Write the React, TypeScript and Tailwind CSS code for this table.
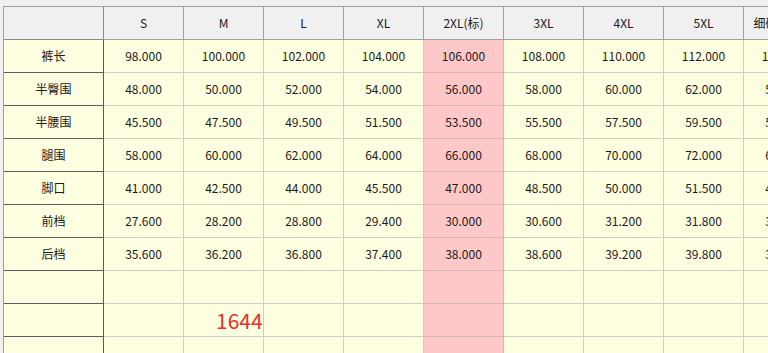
import React from "react";

const sizes = ["S", "M", "L", "XL", "2XL(标)", "3XL", "4XL", "5XL", "细码尺寸表"];
const rows: [string, string[]][] = [
  ["裤长", ["98.000", "100.000", "102.000", "104.000", "106.000", "108.000", "110.000", "112.000", "114.000"]],
  ["半臀围", ["48.000", "50.000", "52.000", "54.000", "56.000", "58.000", "60.000", "62.000", "54.000"]],
  ["半腰围", ["45.500", "47.500", "49.500", "51.500", "53.500", "55.500", "57.500", "59.500", "51.500"]],
  ["腿围", ["58.000", "60.000", "62.000", "64.000", "66.000", "68.000", "70.000", "72.000", "64.000"]],
  ["脚口", ["41.000", "42.500", "44.000", "45.500", "47.000", "48.500", "50.000", "51.500", "45.500"]],
  ["前档", ["27.600", "28.200", "28.800", "29.400", "30.000", "30.600", "31.200", "31.800", "32.400"]],
  ["后档", ["35.600", "36.200", "36.800", "37.400", "38.000", "38.600", "39.200", "39.800", "30.400"]],
  ["", ["", "", "", "", "", "", "", "", ""]],
  ["", ["", "", "", "", "", "", "", "", ""]],
  ["", ["", "", "", "", "", "", "", "", ""]],
];

const font = { fontFamily: '"Noto Sans CJK SC", "Noto Sans", sans-serif' };

export default function App() {
  return (
    <div
      className="relative w-[768px] h-[353px] overflow-hidden bg-[#f0f0f0] text-[12px] text-[#1a1a1a]"
      style={font}
    >
      <div className="pl-[3px] pt-[6px]">
        <div className="w-[900px] border-l border-t border-[#a0a0a0]">
          <div className="flex h-[33px]">
            <div className="w-[100px] shrink-0 border-r border-b border-[#8a8a8a] bg-[#f0f0f0]" />
            {sizes.map((s) => (
              <div
                key={s}
                className="w-[80px] shrink-0 flex items-center justify-center border-r border-b border-[#a0a0a0] bg-[#f0f0f0] whitespace-nowrap"
              >
                {s}
              </div>
            ))}
          </div>
          {rows.map(([label, vals], i) => (
            <div key={i} className="flex h-[33px]">
              <div className="w-[100px] shrink-0 flex items-center justify-center border-r border-b border-[#5c5c5c] bg-[#ffffe1]">
                {label}
              </div>
              {vals.map((v, j) => (
                <div
                  key={j}
                  className={
                    j === 4
                      ? "w-[80px] shrink-0 flex items-center justify-center border-r border-b border-[#d4b4b4] bg-[#ffc8c8]"
                      : "w-[80px] shrink-0 flex items-center justify-center border-r border-b border-[#cfcfc4] bg-[#ffffe1]"
                  }
                >
                  {v}
                </div>
              ))}
            </div>
          ))}
        </div>
      </div>
      <div className="absolute left-[216px] top-[310px] text-[21px] leading-[21px] text-[#e8302c]">
        1644
      </div>
    </div>
  );
}
